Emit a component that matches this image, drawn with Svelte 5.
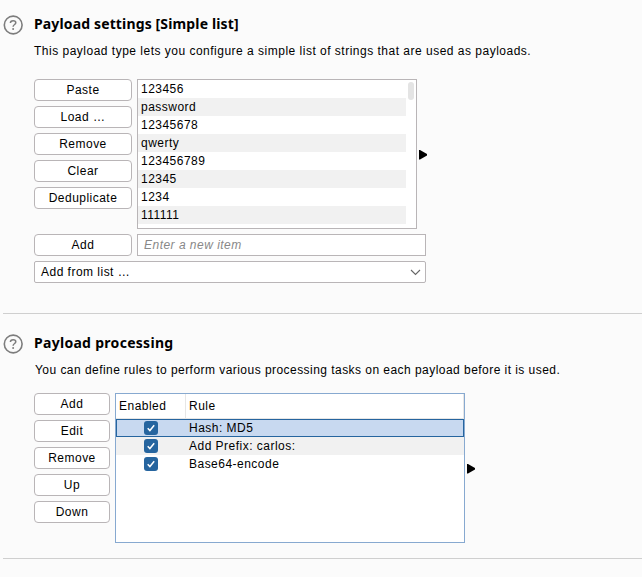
<script>
  const words = ['123456', 'password', '12345678', 'qwerty', '123456789', '12345', '1234', '111111'];
  const listActions = ['Paste', 'Load …', 'Remove', 'Clear', 'Deduplicate'];
  const ruleActions = ['Add', 'Edit', 'Remove', 'Up', 'Down'];
  const rules = ['Hash: MD5', 'Add Prefix: carlos:', 'Base64-encode'];
</script>

{#snippet help()}
  <svg class="help" width="20" height="20" viewBox="0 0 20 20" fill="none" stroke="#7d7d7d">
    <circle cx="10.2" cy="10" r="8.9" stroke-width="1.6" />
    <path d="M7.4 8C7.4 6.600 8.500 5.700 10.1 5.700S12.800 6.500 12.800 7.800C12.800 9.500 10.1 9.600 10.1 11.800" stroke-width="1.5" />
    <circle cx="10.1" cy="14" r="1" fill="#7d7d7d" stroke="none" />
  </svg>
{/snippet}

{#snippet arrow()}
  <svg class="arrow" width="8" height="10" viewBox="0 0 8 10"><path d="M0 0H1L8 4V5.500L1 9.500H0Z" fill="#000" /></svg>
{/snippet}

<main>
  <section class="first">
    {@render help()}
    <div class="content">
      <h2>Payload settings [Simple list]</h2>
      <p class="d1">This payload type lets you configure a simple list of strings that are used as payloads.</p>
      <div class="row">
        <div class="buttons wide">
          {#each listActions as label}<button>{label}</button>{/each}
        </div>
        <div class="list">
          <div class="items">
            {#each words as word}<div class="item">{word}</div>{/each}
          </div>
          <div class="thumb"></div>
        </div>
        {@render arrow()}
      </div>
      <div class="row add">
        <button class="addbtn">Add</button>
        <input placeholder="Enter a new item" />
      </div>
      <div class="combo">
        <span>Add from list …</span>
        <svg width="11" height="7" viewBox="0 0 11 7" fill="none" stroke="#666" stroke-width="1.1"><path d="M1 1L5.500 5.500L10 1" /></svg>
      </div>
    </div>
  </section>
  <section class="second">
    {@render help()}
    <div class="content">
      <h2 class="h2b">Payload processing</h2>
      <p class="d2">You can define rules to perform various processing tasks on each payload before it is used.</p>
      <div class="row">
        <div class="buttons narrow">
          {#each ruleActions as label}<button>{label}</button>{/each}
        </div>
        <div class="table">
          <div class="thead"><span class="c1">Enabled</span><span class="c2">Rule</span></div>
          {#each rules as rule, i}
            <div class="tr" class:selected={i === 0} class:alt={i === 1}>
              <span class="check">
                <svg width="14" height="14" viewBox="0 0 14 14"><rect width="14" height="14" rx="3" fill="#26659f" /><path d="M3.700 7.200L5.900 9.500L10.200 4.300" fill="none" stroke="#fff" stroke-width="1.500" /></svg>
              </span>
              <span class="rule">{rule}</span>
            </div>
          {/each}
        </div>
        {@render arrow()}
      </div>
    </div>
  </section>
</main>

<style>
  :global(body) { margin: 0; background: #fbfbfb; overflow: hidden; }
  main, button, input { font: 12px "Liberation Sans", sans-serif; letter-spacing: 0.48px; color: #000; }
  main { width: 642px; height: 577px; box-sizing: border-box; padding-left: 3px; white-space: nowrap; }
  section { display: flex; box-sizing: border-box; border-bottom: 1px solid #cfcfcf; }
  .first { height: 314px; padding-top: 15px; }
  .second { height: 245px; padding-top: 20px; }
  .help { flex: none; margin: 0 11px 0 0; }
  .content { flex: 1; }
  h2 { font: bold 14px/18px "Noto Sans", sans-serif; letter-spacing: 0.14px; margin: 0; }
  .h2b { letter-spacing: 0.29px; }
  p { margin: 10px 0 0; height: 36px; line-height: 16px; }
  .d1 { letter-spacing: 0.495px; }
  .d2 { height: 31px; letter-spacing: 0.455px; padding-left: 1px; }
  .row { display: flex; }
  .buttons { display: flex; flex-direction: column; gap: 5px; }
  .wide { width: 98px; }
  .narrow { width: 76px; }
  button { height: 22px; width: 100%; flex: none; padding: 0; border: 1px solid #b9b5b7; border-radius: 4px; background: #fff; line-height: 20px; text-align: center; }
  .list { width: 280px; height: 150px; box-sizing: border-box; margin-left: 5px; border: 1px solid #b9b5b7; background: #fff; display: flex; }
  .items { width: 268px; }
  .item { height: 18px; line-height: 18px; padding-left: 3px; }
  .item:nth-child(even) { background: #f1f1f1; }
  .thumb { width: 6px; height: 18px; margin: 2px 0 0 2px; border-radius: 3px; background: #e4e4e4; }
  .arrow { align-self: center; margin: 1px 0 0 2px; }
  .add { margin-top: 5px; }
  .addbtn { width: 98px; }
  input { width: 289px; height: 22px; box-sizing: border-box; margin: 0 0 0 5px; border: 1px solid #b9b5b7; padding: 0 6px; background: #fff; }
  input::placeholder { color: #888; font-style: italic; opacity: 1; }
  .combo { width: 392px; height: 22px; box-sizing: border-box; margin-top: 5px; border: 1px solid #b9b5b7; border-radius: 2px; background: #fff; display: flex; align-items: center; justify-content: space-between; padding: 0 4px 0 6px; }
  .table { width: 350px; height: 150px; box-sizing: border-box; margin-left: 5px; border: 1px solid #87a9d0; background: #fff; }
  .thead { height: 25px; box-sizing: border-box; display: flex; line-height: 24px; border-bottom: 1px solid #e6e6e6; border-right: 1px solid #e6e6e6; }
  .c1 { width: 70px; box-sizing: border-box; padding-left: 3px; border-right: 1px solid #e6e6e6; }
  .c2 { padding-left: 3px; }
  .tr { height: 18px; display: flex; align-items: center; line-height: 18px; box-sizing: border-box; }
  .alt { background: #f1f1f1; }
  .selected { background: #c8d9f0; box-shadow: inset 0 0 0 1px #26659f; }
  .check { width: 70px; box-sizing: border-box; padding-left: 28px; display: flex; }
  .rule { padding-left: 3px; }
</style>
